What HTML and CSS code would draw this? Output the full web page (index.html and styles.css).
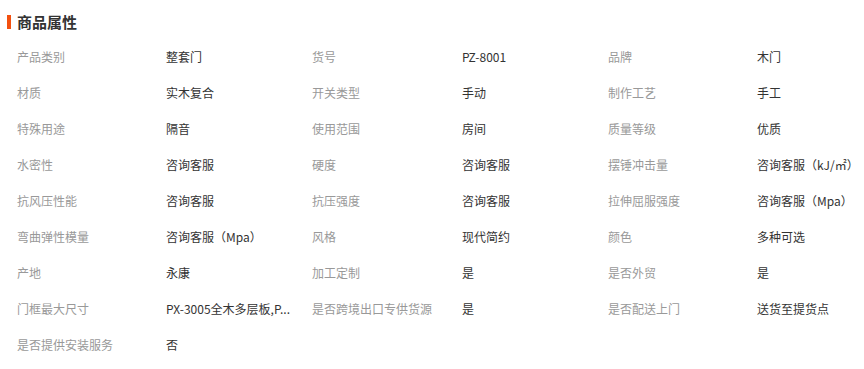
FILE: index.html
```html
<!DOCTYPE html>
<html lang="zh">
<head>
<meta charset="utf-8">
<link rel="stylesheet" href="styles.css">
</head>
<body>
<div class="attrs">
  <div class="title"><span class="bar"></span><h2>商品属性</h2></div>
  <div class="grid">
    <div class="k">产品类别</div><div class="v">整套门</div>
    <div class="k">货号</div><div class="v">PZ-8001</div>
    <div class="k">品牌</div><div class="v">木门</div>

    <div class="k">材质</div><div class="v">实木复合</div>
    <div class="k">开关类型</div><div class="v">手动</div>
    <div class="k">制作工艺</div><div class="v">手工</div>

    <div class="k">特殊用途</div><div class="v">隔音</div>
    <div class="k">使用范围</div><div class="v">房间</div>
    <div class="k">质量等级</div><div class="v">优质</div>

    <div class="k">水密性</div><div class="v">咨询客服</div>
    <div class="k">硬度</div><div class="v">咨询客服</div>
    <div class="k">摆锤冲击量</div><div class="v">咨询客服（kJ/㎡）</div>

    <div class="k">抗风压性能</div><div class="v">咨询客服</div>
    <div class="k">抗压强度</div><div class="v">咨询客服</div>
    <div class="k">拉伸屈服强度</div><div class="v">咨询客服（Mpa）</div>

    <div class="k">弯曲弹性模量</div><div class="v">咨询客服（Mpa）</div>
    <div class="k">风格</div><div class="v">现代简约</div>
    <div class="k">颜色</div><div class="v">多种可选</div>

    <div class="k">产地</div><div class="v">永康</div>
    <div class="k">加工定制</div><div class="v">是</div>
    <div class="k">是否外贸</div><div class="v">是</div>

    <div class="k">门框最大尺寸</div><div class="v">PX-3005全木多层板,P...</div>
    <div class="k">是否跨境出口专供货源</div><div class="v">是</div>
    <div class="k">是否配送上门</div><div class="v">送货至提货点</div>

    <div class="k">是否提供安装服务</div><div class="v">否</div>
  </div>
</div>
</body>
</html>
```
FILE: styles.css
```css
html, body {
  margin: 0;
  padding: 0;
  background: #fff;
}
body {
  font-family: "Noto Sans CJK SC", "Liberation Sans", sans-serif;
  font-size: 12px;
  color: #333;
  overflow: hidden;
}
.attrs {
  width: 864px;
}
.title {
  display: flex;
  align-items: center;
  gap: 6px;
  padding: 14px 0 0 7px;
  height: 16px;
}
.bar {
  width: 4px;
  height: 14px;
  background: #f3500f;
}
.title h2 {
  margin: 0;
  font-size: 15px;
  line-height: 16px;
  font-weight: bold;
  color: #333;
}
.grid {
  margin-top: 9px;
  padding-left: 17px;
  display: grid;
  grid-template-columns: 149px 146px 150px 146px 149px 1fr;
  grid-auto-rows: 36px;
  align-items: center;
}
.k {
  color: #999;
  white-space: nowrap;
  line-height: 16px;
}
.v {
  color: #333;
  white-space: nowrap;
  line-height: 16px;
}
```
